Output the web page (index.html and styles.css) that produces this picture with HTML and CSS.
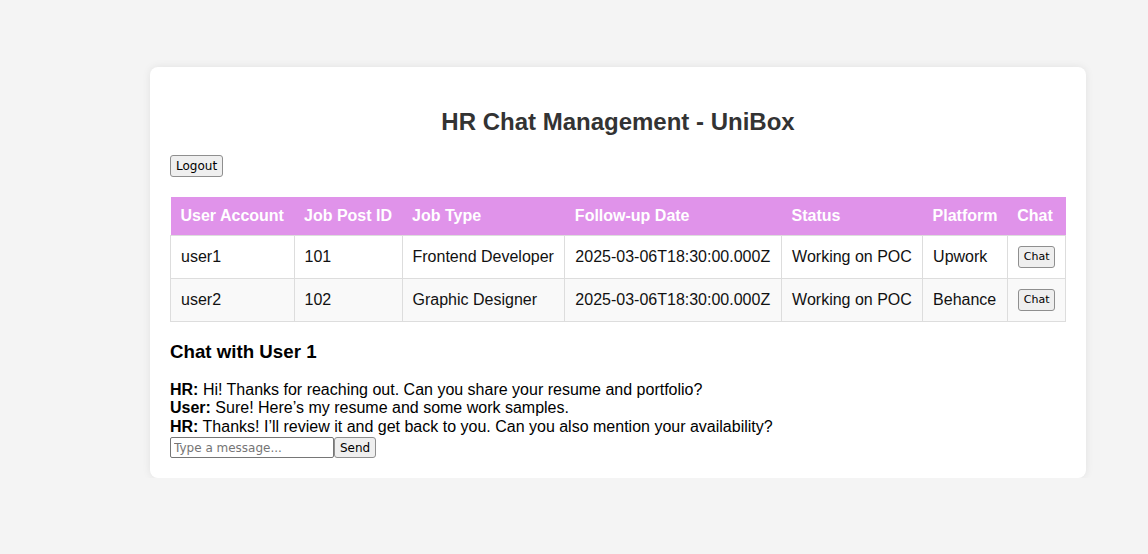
FILE: index.html
```html
<!DOCTYPE html>
<html>
<head>
<meta charset="utf-8">
<link rel="stylesheet" href="styles.css">
</head>
<body>
<div class="card">
  <h2 class="title">HR Chat Management - UniBox</h2>
  <button class="btn">Logout</button>
  <table class="grid">
    <thead>
      <tr>
        <th>User Account</th>
        <th>Job Post ID</th>
        <th>Job Type</th>
        <th>Follow-up Date</th>
        <th>Status</th>
        <th>Platform</th>
        <th>Chat</th>
      </tr>
    </thead>
    <tbody>
      <tr>
        <td>user1</td>
        <td>101</td>
        <td>Frontend Developer</td>
        <td>2025-03-06T18:30:00.000Z</td>
        <td>Working on POC</td>
        <td>Upwork</td>
        <td><button class="btn">Chat</button></td>
      </tr>
      <tr>
        <td>user2</td>
        <td>102</td>
        <td>Graphic Designer</td>
        <td>2025-03-06T18:30:00.000Z</td>
        <td>Working on POC</td>
        <td>Behance</td>
        <td><button class="btn">Chat</button></td>
      </tr>
    </tbody>
  </table>
  <h3 class="chat-title">Chat with User 1</h3>
  <div class="messages">
    <div><b>HR:</b> Hi! Thanks for reaching out. Can you share your resume and portfolio?</div>
    <div><b>User:</b> Sure! Here’s my resume and some work samples.</div>
    <div><b>HR:</b> Thanks! I’ll review it and get back to you. Can you also mention your availability?</div>
  </div>
  <div class="composer"><input class="input" type="text" placeholder="Type a message..."><button class="btn send">Send</button></div>
</div>
</body>
</html>
```

FILE: styles.css
```css
html, body {
  margin: 0;
  background: #f4f4f4;
  font-family: "Liberation Sans", Arial, sans-serif;
}
body {
  padding: 67px 0 0 150px;
}
.card {
  box-sizing: border-box;
  width: 936px;
  background: #fff;
  border-radius: 8px;
  padding: 20px;
  box-shadow: 0 0 8px rgba(0, 0, 0, 0.08);
}
.title {
  text-align: center;
  color: #333;
  font-size: 24px;
  margin: 21px 0 19px;
  line-height: 28px;
}
.btn {
  font-family: "DejaVu Sans", sans-serif;
  font-size: 12px;
  padding: 3px 5px;
  border: 1px solid #8f8f8f;
  border-radius: 3px;
  background: #efefef;
  color: #000;
  line-height: 14px;
}
.grid {
  width: 100%;
  border-collapse: collapse;
  margin-top: 20px;
  font-size: 16px;
}
.grid th,
.grid td {
  white-space: nowrap;
  padding: 10px 9px 10px 10px;
  line-height: 18px;
}
.grid th {
  background: #e093ea;
  color: #fff;
  text-align: left;
  border: 0;
}
.grid td {
  border: 1px solid #ddd;
  color: #111;
}
.grid tbody tr:nth-child(even) td {
  background: #f9f9f9;
}
.grid td .btn {
  font-size: 11px;
}
.chat-title {
  font-size: 18.72px;
  margin: 19px 0 18px;
  line-height: 22px;
}
.messages {
  font-size: 16px;
  line-height: 18.4px;
}
.composer {
  display: flex;
  align-items: flex-start;
  margin-top: 1px;
}
.input {
  box-sizing: border-box;
  width: 164px;
  height: 21px;
  font-family: "DejaVu Sans", sans-serif;
  font-size: 12px;
  padding: 1px 3px;
  border: 1px solid #767676;
  border-radius: 2px;
}
.send {
  box-sizing: border-box;
  height: 21px;
  padding: 2px 5px;
}
```
